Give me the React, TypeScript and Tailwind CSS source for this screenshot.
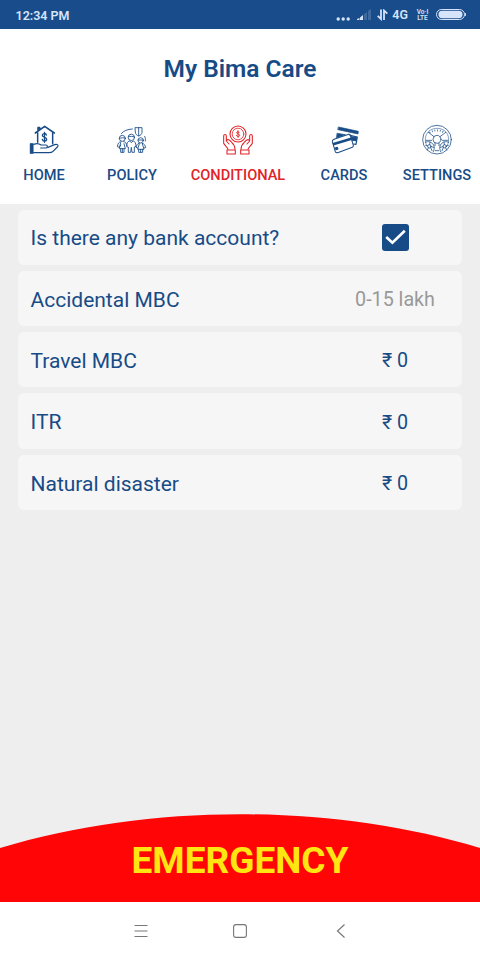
import React from 'react';

type TabId = 'home' | 'policy' | 'conditional' | 'cards' | 'settings';

interface Tab {
  id: TabId;
  label: string;
  width: string;
  icon: React.ReactNode;
}

interface Row {
  label: string;
  value: React.ReactNode;
}

function TabIcon({ viewBox, children }: { viewBox: string; children: React.ReactNode }) {
  return (
    <svg
      className="h-9 w-9"
      viewBox={viewBox}
      fill="none"
      stroke="currentColor"
      strokeWidth={3.2}
      strokeLinecap="round"
      strokeLinejoin="round"
    >
      {children}
    </svg>
  );
}

const HomeIcon = (
  <TabIcon viewBox="18 18 108 108">
    <path strokeWidth={4.8} d="M46 54 L74 34 L103 54 M54 48 V38 H59 V44" />
    <path strokeWidth={4.5} d="M53 53 V82 M98 53 V86" />
    <path strokeWidth={4} d="M79 60 C78 54 67 54 67 61 C67 68 80 65 80 73 C80 80 68 80 67 73 M73.5 52 V82" />
    <path strokeWidth={3.6} d="M41 88 C50 84 57 85 63 90 H78 C84 91 83 99 77 99 H62 M84 97 L104 89 C112 86 117 91 112 96 L99 109 C96 112 92 113 87 113 H41" />
    <path fill="currentColor" d="M31 86 H39 V115 H31 Z" />
  </TabIcon>
);

const PolicyIcon = (
  <TabIcon viewBox="27 18 108 108">
    <g strokeWidth={2.6}>
      <path d="M91 38 H111 V52 C111 58 106 61 101 63 C96 61 91 58 91 52 Z M101 38 V62" />
      <path d="M49 56 C56 47 67 43 82 42 M119 64 C121 68 122 72 121 78" />
      <circle cx="52" cy="70" r="9" />
      <circle cx="79" cy="67" r="9.5" />
      <circle cx="107" cy="76" r="8" />
      <path d="M43 70 C49 69 57 66 61 70 M70 65 C76 64 82 63 88 66 M99 75 H115" />
      <path d="M48 80 C40 81 39 86 37 95 L43 97 L47 90 M56 80 C62 81 64 84 66 92 M47 83 L43 101 H61 L57 86 M47 101 V112 H52 V101 M57 101 V112 H52" />
      <path d="M73 78 C66 80 66 84 65 95 L70 96 V112 H77 L79 97 L81 112 H88 V96 L93 94 C92 84 91 80 85 78 L79 82 Z" />
      <path d="M102 85 C96 86 96 90 93 97 L98 99 M112 85 C118 86 120 90 122 98 L117 99 M103 86 L98 103 H117 L112 86 M101 103 V112 H107 V103 M113 103 V112 H107" />
    </g>
  </TabIcon>
);

const ConditionalIcon = (
  <TabIcon viewBox="30 18 108 108">
    <circle cx="84" cy="57" r="24" />
    <circle cx="84" cy="57" r="17.5" strokeWidth={2.4} />
    <path strokeWidth={2.8} d="M88 53 C87 49 80 49 80 53 C80 58 89 56 89 61 C89 66 80 66 79 61 M84 47 V67" />
    <path d="M54 103 C53 96 44 92 41 85 V63 C41 57 49 57 49 63 V78 L57 87 M49 78 C53 69 60 77 65 82 C73 89 75 93 75 103" />
    <path d="M114 103 C115 96 124 92 127 85 V63 C127 57 119 57 119 63 V78 L111 87 M119 78 C115 69 108 77 103 82 C95 89 93 93 93 103" />
    <path d="M51 105 H76 V117 H51 Z M92 105 H117 V117 H92 Z" />
  </TabIcon>
);

const CardsIcon = (
  <TabIcon viewBox="34 18 108 108">
    <path fill="currentColor" strokeWidth={2} d="M72 36 L131 49 L130 57 L70 44 Z" />
    <path fill="currentColor" strokeWidth={2} d="M68 55 L92 59 L66 68 Z" />
    <path strokeWidth={3.5} d="M106 61 L128 66 L124 88 L117 87" />
    <path fill="currentColor" d="M110 65 L126 68 L124 77 L113 76 Z" />
    <path d="M58 73 L102 58 Q106 57 107 61 L116 91 Q117 95 113 97 L69 113 Q64 114 62 110 L53 80 Q52 75 58 73 Z" />
    <path strokeWidth={8} strokeLinecap="butt" d="M55 88 L110 71" />
    <path fill="currentColor" d="M62 99 L68 97 L70 102 L64 104 Z" />
  </TabIcon>
);

const SettingsIcon = (
  <TabIcon viewBox="27 18 108 108">
    <g strokeWidth={2.3}>
      <circle cx="81" cy="74" r="43" />
      <path d="M50 91 C41 73 48 53 60 46 C73 38 90 38 102 46 C114 53 121 73 112 91" strokeWidth={1.6} />
      <circle cx="81" cy="73" r="12" />
      <path d="M55 52 L72 65 M107 52 L90 65" />
      <path d="M59 53 C70 44 92 44 103 53" strokeDasharray="2 6" strokeWidth={6} strokeLinecap="butt" />
      <path d="M46 82 C54 77 65 81 71 90 C74 98 73 103 70 110 M116 82 C108 77 97 81 91 90 C88 98 89 103 92 110" />
      <path d="M75 84 V92 M87 84 V92 M48 76 H65 M97 76 H114 M76 107 H86" />
      <circle cx="58" cy="94" r="5" />
      <circle cx="104" cy="94" r="5" />
      <path d="M47 91 L53 93 M60 81 L59 89 M63 95 L71 97 M55 99 L52 105 M62 98 L66 107 M115 91 L109 93 M102 81 L103 89 M99 95 L91 97 M107 99 L110 105 M100 98 L96 107" />
    </g>
  </TabIcon>
);

const TABS: Tab[] = [
  { id: 'home', label: 'HOME', width: 'w-[88px]', icon: HomeIcon },
  { id: 'policy', label: 'POLICY', width: 'w-[88px]', icon: PolicyIcon },
  { id: 'conditional', label: 'CONDITIONAL', width: 'w-[124px]', icon: ConditionalIcon },
  { id: 'cards', label: 'CARDS', width: 'w-[88px]', icon: CardsIcon },
  { id: 'settings', label: 'SETTINGS', width: 'w-[98px]', icon: SettingsIcon },
];

function Checkbox() {
  return (
    <svg className="h-[27px] w-[27px]" viewBox="0 0 27 27" role="img" aria-label="Checked">
      <rect width="27" height="27" rx="3" fill="#174b88" />
      <path d="M4.2 13 L10.4 18.8 L22.8 6.8" fill="none" stroke="#fff" strokeWidth="2.6" />
    </svg>
  );
}

const ROWS: Row[] = [
  { label: 'Is there any bank account?', value: <Checkbox /> },
  { label: 'Accidental MBC', value: <span className="pt-[3px] text-[#999]">0-15 lakh</span> },
  { label: 'Travel MBC', value: <span className="pt-[3px]">₹ 0</span> },
  { label: 'ITR', value: <span className="pt-[3px]">₹ 0</span> },
  { label: 'Natural disaster', value: <span className="pt-[3px]">₹ 0</span> },
];

function StatusBar() {
  return (
    <div className="flex h-[29px] shrink-0 items-center justify-between bg-[#194c8a] pr-[14px] pl-[15.5px] text-[#d5e4fa]">
      <span className="pt-[3px] text-[12.5px] font-semibold">12:34 PM</span>
      <div className="flex items-center">
        <svg className="mt-[4px] mr-[6px] h-[14px] w-[14px]" viewBox="0 0 14 14" fill="currentColor">
          <circle cx="2.2" cy="9" r="1.7" />
          <circle cx="7.2" cy="9" r="1.7" />
          <circle cx="12.2" cy="9" r="1.7" />
        </svg>
        <svg className="mr-[6px] h-[14px] w-[15px]" viewBox="0 0 15 14" fill="currentColor">
          <path d="M1 12 V11 L3.5 10 V12 Z M4 12 V9.5 L7 7 V12 Z" />
          <path opacity="0.2" d="M8 12 V6 L11 4 V12 Z M12 12 V3 L15 1 V12 Z" />
        </svg>
        <svg className="mr-[4px] h-[12px] w-[11px]" viewBox="0 0 11 12" fill="none" stroke="currentColor" strokeWidth="1.8">
          <path d="M4 0.5 V10 L0.7 6.8 M7 11 V1.5 L10.3 4.6" />
        </svg>
        <span className="mr-[8px] pt-px text-[12.5px] font-semibold">4G</span>
        <span className="mr-[7px] flex w-[13px] flex-col items-center pt-px text-[6.5px] leading-[7px] font-semibold">
          <span className="h-[6px]">Vo·I</span>
          <span>LTE</span>
        </span>
        <svg className="h-[11px] w-[30px]" viewBox="0 0 30 11">
          <rect x="0.5" y="0.5" width="28" height="10" rx="5" fill="none" stroke="currentColor" />
          <rect x="2.5" y="1.8" width="24" height="7.4" rx="3.7" fill="currentColor" />
          <path d="M29.4 4 V7" stroke="currentColor" />
        </svg>
      </div>
    </div>
  );
}

function TabBar({ active }: { active: TabId }) {
  return (
    <nav className="mt-[38px] flex">
      {TABS.map((tab) => (
        <button
          key={tab.id}
          className={`flex shrink-0 flex-col items-center ${tab.width} ${tab.id === active ? 'text-[#df2329]' : 'text-[#194c86]'}`}
        >
          {tab.icon}
          <span className="mt-[8px] text-[14.6px] leading-5 font-medium">{tab.label}</span>
        </button>
      ))}
    </nav>
  );
}

function EmergencyButton() {
  return (
    <button className="flex flex-col">
      <svg className="block h-[34px] w-[480px]" viewBox="0 0 480 34" preserveAspectRatio="none">
        <path d="M0 34 C150 -11 330 -11 480 34 Z" fill="#ff0505" />
      </svg>
      <span className="flex h-[54px] w-full justify-center bg-[#ff0505]">
        <span className="-mt-[7px] text-[37px] leading-10 font-bold text-[#ffe512]">EMERGENCY</span>
      </span>
    </button>
  );
}

function NavigationBar() {
  return (
    <div className="flex h-[58px] shrink-0 items-center justify-between bg-white pr-[133px] pl-[134px]">
      <svg className="h-[14px] w-[14px]" viewBox="0 0 14 14" stroke="#777" strokeWidth="1.1">
        <path d="M0.5 1.5 H13.5 M0.5 7 H13.5 M0.5 12.5 H13.5" />
      </svg>
      <svg className="-ml-[2px] h-[14px] w-[14px]" viewBox="0 0 14 14" fill="none" stroke="#777" strokeWidth="1.1">
        <rect x="0.6" y="0.6" width="12.8" height="12.8" rx="2.5" />
      </svg>
      <svg className="h-[14px] w-[14px]" viewBox="0 0 14 14" fill="none" stroke="#777" strokeWidth="1.2">
        <path d="M11.5 0.5 L4.5 7 L11.5 13.5" />
      </svg>
    </div>
  );
}

export default function App() {
  return (
    <div className="flex h-[960px] w-[480px] flex-col overflow-hidden bg-[#eee] font-['Roboto','Noto_Sans',sans-serif] text-[#174b86]">
      <StatusBar />

      <header className="h-[174.5px] shrink-0 overflow-hidden bg-white pt-[25px]">
        <h1 className="text-center text-[24.5px] leading-[29px] font-semibold">My Bima Care</h1>
        <TabBar active="conditional" />
      </header>

      <main className="flex flex-1 flex-col gap-[6px] px-[18px] pt-[6px]">
        {ROWS.map((row) => (
          <div key={row.label} className="flex h-[55.3px] items-center justify-between rounded-md bg-[#f6f6f6] pl-[12.5px]">
            <span className="pt-[4px] text-[21px]">{row.label}</span>
            <span className="flex w-[134px] justify-center text-[19.7px]">{row.value}</span>
          </div>
        ))}
      </main>

      <EmergencyButton />
      <NavigationBar />
    </div>
  );
}
